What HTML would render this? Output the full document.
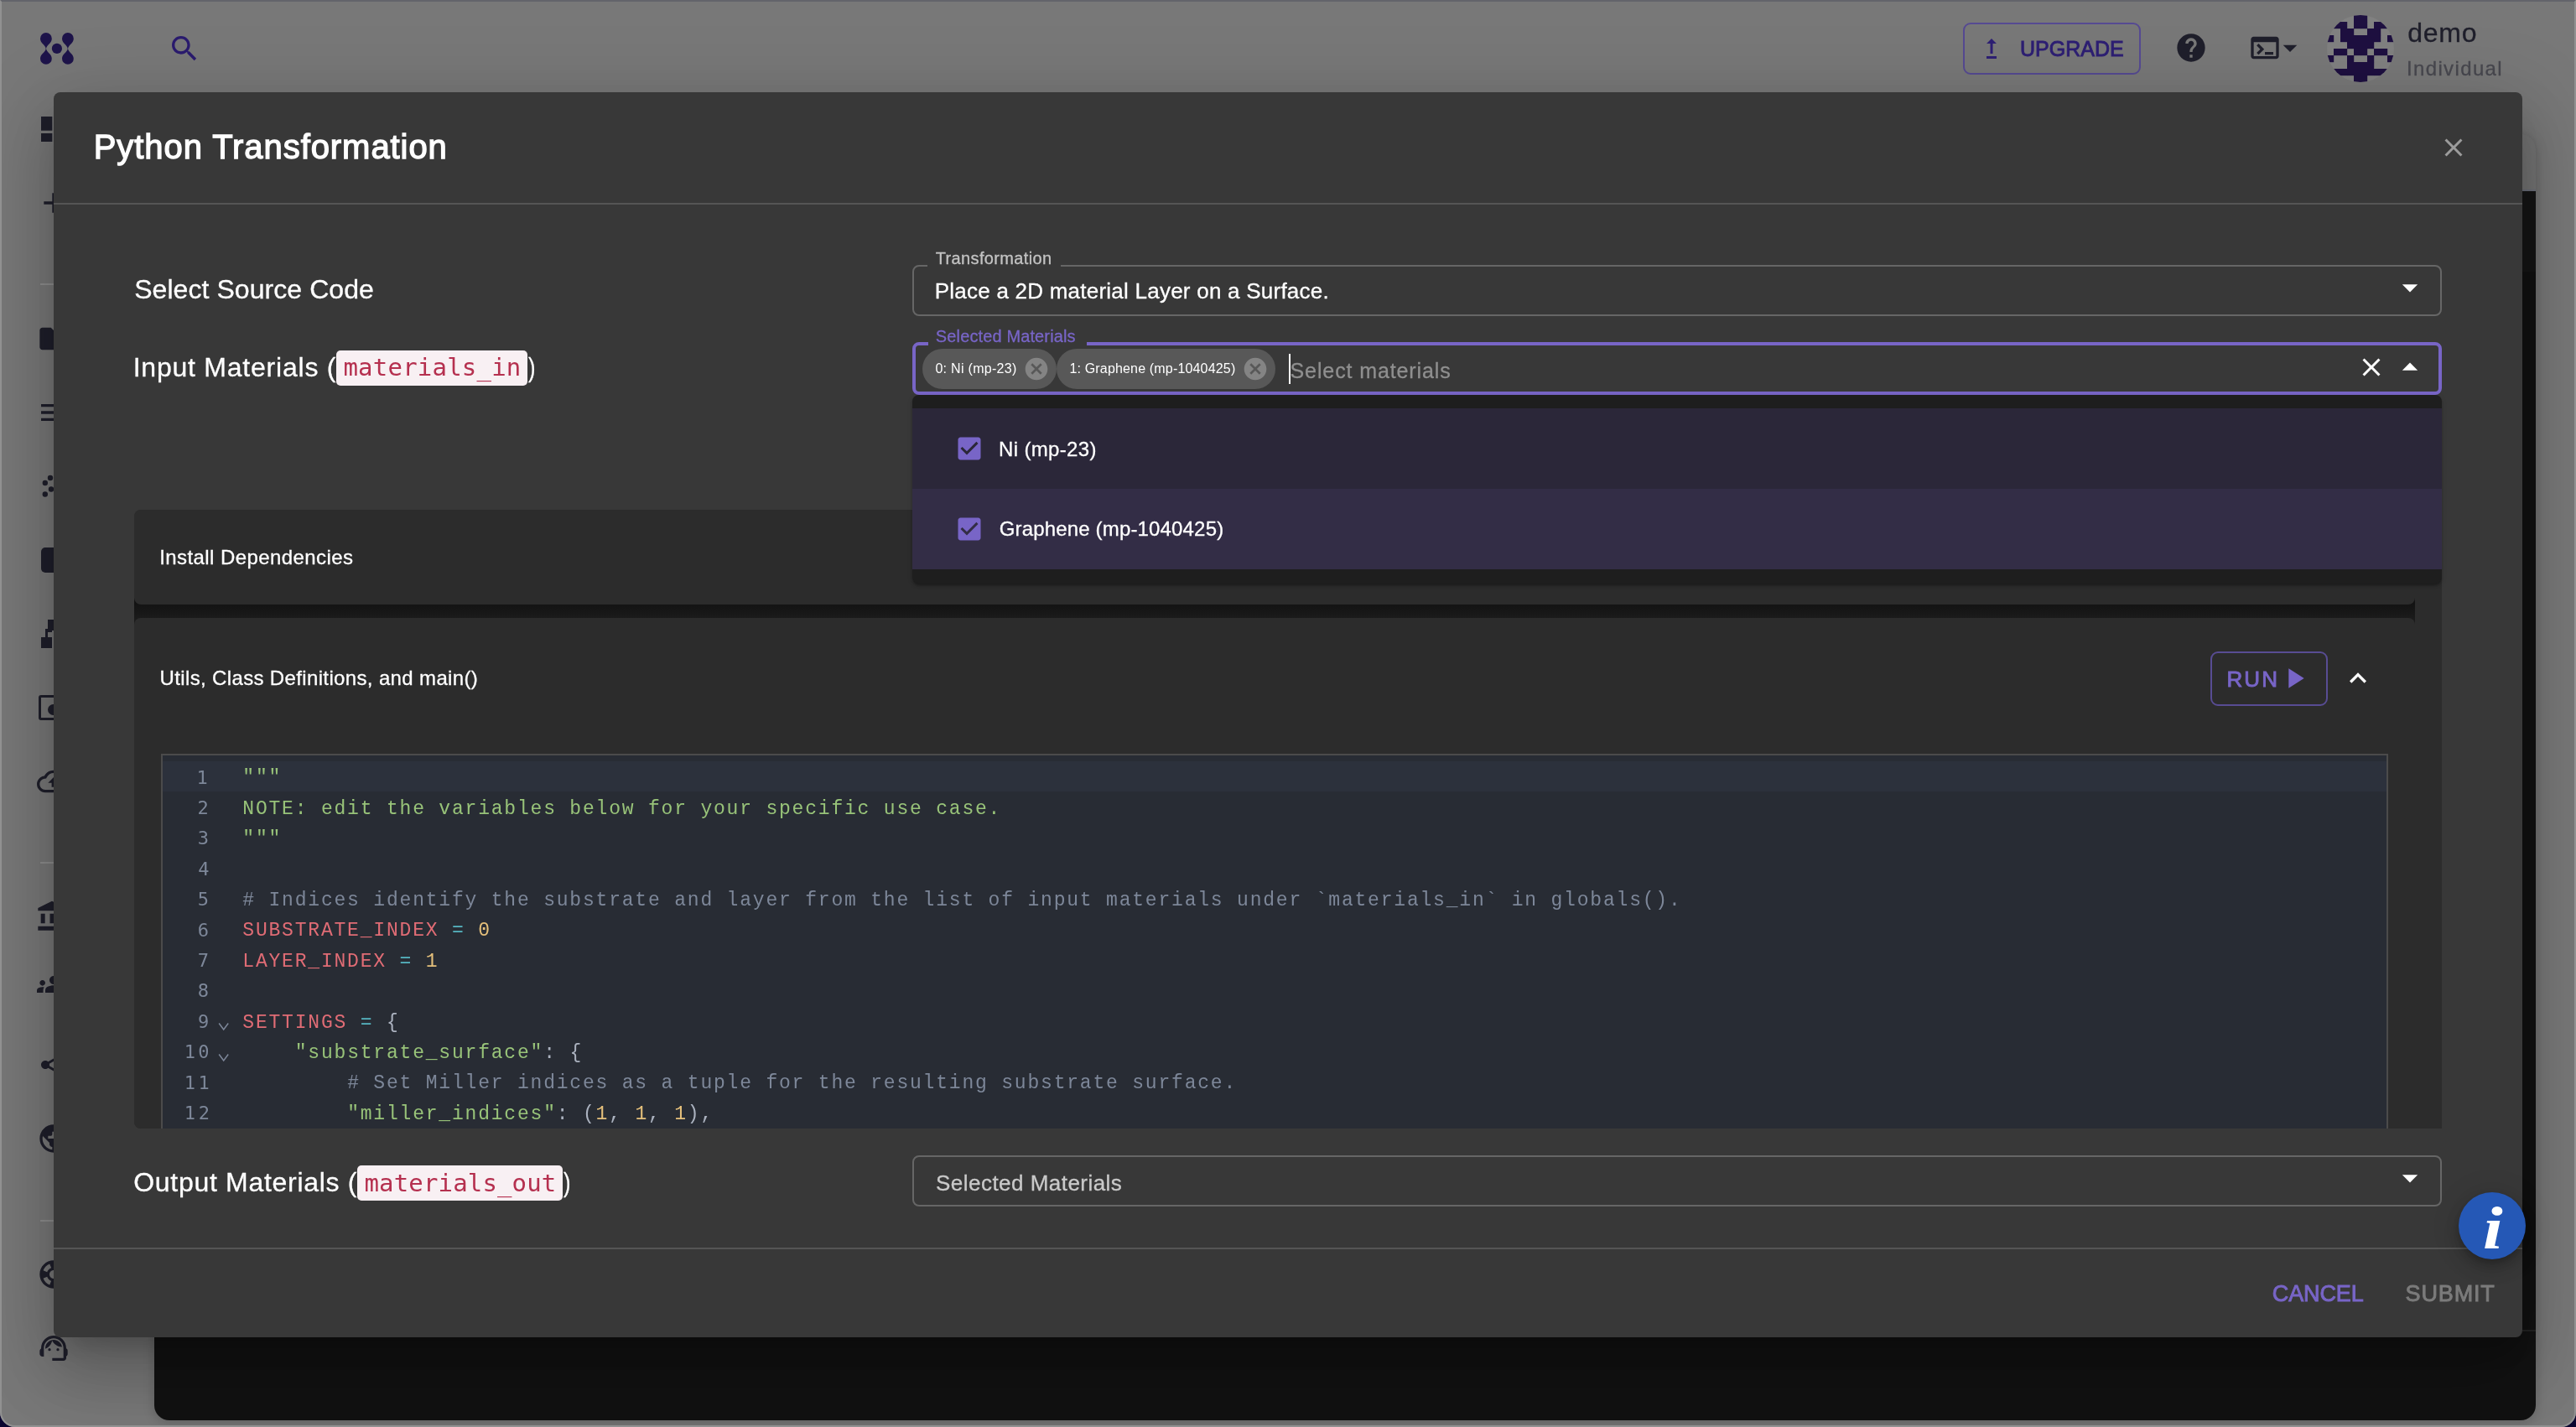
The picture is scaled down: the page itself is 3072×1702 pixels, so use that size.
<!DOCTYPE html>
<html lang="en"><head><meta charset="utf-8"><title>Python Transformation</title>
<style>
*{box-sizing:border-box;margin:0;padding:0}
html{background:#0a0530}
body{width:3072px;height:1702px;overflow:hidden;position:relative;font-family:"Liberation Sans",sans-serif;background:#0a0530}
.a{position:absolute}
.t{position:absolute;line-height:1;white-space:pre}
#page{will-change:transform}
#page{position:absolute;left:0;top:0;width:3072px;height:1702px;background:#787878;border-radius:0 0 18px 18px;overflow:hidden}
#frame{position:absolute;left:0;top:0;width:3072px;height:1702px;border:2px solid #919191;border-top:2px solid #63646b;border-radius:0 0 18px 18px;pointer-events:none}
#dialog{position:absolute;left:64px;top:110px;width:2944px;height:1485px;background:#383838;border-radius:8px;box-shadow:0 22px 30px -14px rgba(0,0,0,.2),0 48px 76px 6px rgba(0,0,0,.14),0 18px 92px 16px rgba(0,0,0,.12)}
.field{position:absolute;border:2px solid #666;border-radius:8px}
.code{position:absolute;background:#f8f0f3;border-radius:5px}
.ln{position:absolute;left:0;width:2650px;height:36.4px}
</style></head><body><div id="page">
<svg class="a" style="left:40px;top:30px" width="60" height="56" viewBox="40 30 60 56"><g fill="#1e144a">
<path d="M54.9 58.4 C54.4 53.5 48 51.5 48 45.9 A6.9 6.9 0 0 1 61.8 45.9 C61.8 51.5 55.4 53.5 54.9 58.4Z"/>
<path d="M54.9 57.4 C54.4 62.3 48 64.3 48 69.9 A6.9 6.9 0 0 0 61.8 69.9 C61.8 64.3 55.4 62.3 54.9 57.4Z"/>
<path d="M80.9 58.4 C80.4 53.5 74 51.5 74 45.9 A6.9 6.9 0 0 1 87.8 45.9 C87.8 51.5 81.4 53.5 80.9 58.4Z"/>
<path d="M80.9 57.4 C80.4 62.3 74 64.3 74 69.9 A6.9 6.9 0 0 0 87.8 69.9 C87.8 64.3 81.4 62.3 80.9 57.4Z"/>
<circle cx="67.9" cy="57.9" r="6.1"/></g></svg><svg class="a" style="left:200px;top:38px" width="40" height="40" viewBox="0 0 24 24"><path fill="#2a1b6e" d="M15.5 14h-.79l-.28-.27C15.41 12.59 16 11.11 16 9.5 16 5.91 13.09 3 9.5 3S3 5.91 3 9.5 5.91 16 9.5 16c1.61 0 3.09-.59 4.23-1.57l.27.28v.79l5 4.99L20.49 19l-4.99-5zm-6 0C7.01 14 5 11.990 5 9.5S7.01 5 9.5 5 14 7.01 14 9.5 11.99 14 9.500 14z"/></svg><div class="a" style="left:2341px;top:27px;width:212px;height:62px;border:2px solid #564a92;border-radius:9px"></div><svg class="a" style="left:2357px;top:40px" width="36" height="36" viewBox="0 0 24 24"><path fill="#2d1f73" d="M16 18v2H8v-2h8zM11 7.99V16h2V7.990h3L12 4 8 7.990h3z"/></svg><span class="t" style="left:2409.05px;top:45.64px;font-size:25px;color:#2d1f73;letter-spacing:-0.010px;-webkit-text-stroke:0.9px #2d1f73;">UPGRADE</span><svg class="a" style="left:2593px;top:37px" width="40" height="40" viewBox="0 0 24 24"><path fill="#1f1f2b" d="M12 2C6.48 2 2 6.48 2 12s4.48 10 10 10 10-4.48 10-10S17.52 2 12 2zm1 17h-2v-2h2v2zm2.070-7.750-.9.920C13.450 12.9 13 13.5 13 15h-2v-.5c0-1.1.450-2.100 1.170-2.830l1.240-1.260c.370-.36.590-.86.590-1.410 0-1.100-.9-2-2-2s-2 .9-2 2H8c0-2.210 1.790-4 4-4s4 1.790 4 4c0 .880-.360 1.680-.930 2.250z"/></svg><svg class="a" style="left:2681px;top:37px" width="40" height="40" viewBox="0 0 24 24"><path fill="#1f1f2b" d="M20 4H4c-1.110 0-2 .9-2 2v12c0 1.100.890 2 2 2h16c1.100 0 2-.9 2-2V6c0-1.100-.9-2-2-2zm0 14H4V8h16v10zm-2-1h-6v-2h6v2zM7.500 17l-1.410-1.410L8.670 13l-2.590-2.590L7.500 9l4 4-4 4z"/></svg><svg class="a" style="left:2711px;top:37px" width="40" height="40" viewBox="0 0 24 24"><path fill="#1f1f2b" d="M7 10l5 5 5-5z"/></svg><svg class="a" style="left:2775px;top:18px;border-radius:50%;background:#818181" width="80" height="80" viewBox="0 0 80 80"><g fill="#1e1040"><rect x="32" y="0" width="8.2" height="8.2"/><rect x="40" y="0" width="8.2" height="8.2"/><rect x="8" y="8" width="8.2" height="8.2"/><rect x="16" y="8" width="8.2" height="8.2"/><rect x="32" y="8" width="8.2" height="8.2"/><rect x="40" y="8" width="8.2" height="8.2"/><rect x="56" y="8" width="8.2" height="8.2"/><rect x="64" y="8" width="8.2" height="8.2"/><rect x="16" y="16" width="8.2" height="8.2"/><rect x="24" y="16" width="8.2" height="8.2"/><rect x="48" y="16" width="8.2" height="8.2"/><rect x="56" y="16" width="8.2" height="8.2"/><rect x="0" y="24" width="8.2" height="8.2"/><rect x="16" y="24" width="8.2" height="8.2"/><rect x="24" y="24" width="8.2" height="8.2"/><rect x="32" y="24" width="8.2" height="8.2"/><rect x="40" y="24" width="8.2" height="8.2"/><rect x="48" y="24" width="8.2" height="8.2"/><rect x="56" y="24" width="8.2" height="8.2"/><rect x="72" y="24" width="8.2" height="8.2"/><rect x="24" y="32" width="8.2" height="8.2"/><rect x="32" y="32" width="8.2" height="8.2"/><rect x="40" y="32" width="8.2" height="8.2"/><rect x="48" y="32" width="8.2" height="8.2"/><rect x="8" y="40" width="8.2" height="8.2"/><rect x="16" y="40" width="8.2" height="8.2"/><rect x="32" y="40" width="8.2" height="8.2"/><rect x="40" y="40" width="8.2" height="8.2"/><rect x="56" y="40" width="8.2" height="8.2"/><rect x="64" y="40" width="8.2" height="8.2"/><rect x="0" y="48" width="8.2" height="8.2"/><rect x="24" y="48" width="8.2" height="8.2"/><rect x="48" y="48" width="8.2" height="8.2"/><rect x="72" y="48" width="8.2" height="8.2"/><rect x="24" y="56" width="8.2" height="8.2"/><rect x="32" y="56" width="8.2" height="8.2"/><rect x="40" y="56" width="8.2" height="8.2"/><rect x="48" y="56" width="8.2" height="8.2"/><rect x="8" y="64" width="8.2" height="8.2"/><rect x="16" y="64" width="8.2" height="8.2"/><rect x="24" y="64" width="8.2" height="8.2"/><rect x="32" y="64" width="8.2" height="8.2"/><rect x="40" y="64" width="8.2" height="8.2"/><rect x="48" y="64" width="8.2" height="8.2"/><rect x="56" y="64" width="8.2" height="8.2"/><rect x="64" y="64" width="8.2" height="8.2"/><rect x="32" y="72" width="8.2" height="8.2"/><rect x="40" y="72" width="8.2" height="8.2"/></g></svg><span class="t" style="left:2871.15px;top:22.71px;font-size:32px;color:#1f1f2b;letter-spacing:0.783px;-webkit-text-stroke:0.3px #1f1f2b;">demo</span><span class="t" style="left:2869.95px;top:69.98px;font-size:24px;color:#48484f;letter-spacing:1.370px;-webkit-text-stroke:0.3px #48484f;">Individual</span><svg class="a" style="left:44px;top:134px" width="40" height="40" viewBox="0 0 24 24"><path fill="#1f1f2b" d="M3 13h8V3H3v10zm0 8h8v-6H3v6zm10 0h8V11h-8v10zm0-18v6h8V3h-8z"/></svg><svg class="a" style="left:44px;top:221.5px" width="40" height="40" viewBox="0 0 24 24"><path fill="#1f1f2b" d="M19 13h-6v6h-2v-6H5v-2h6V5h2v6h6v2z"/></svg><div class="a" style="left:48px;top:338px;width:40px;height:2px;background:#8e8e8e"></div><svg class="a" style="left:44px;top:384px" width="40" height="40" viewBox="0 0 24 24"><path fill="#1f1f2b" d="M10 4H4c-1.100 0-1.990.9-1.990 2L2 18c0 1.100.9 2 2 2h16c1.100 0 2-.9 2-2V8c0-1.100-.9-2-2-2h-8l-2-2z"/></svg><svg class="a" style="left:44px;top:471.5px" width="40" height="40" viewBox="0 0 24 24"><path fill="#1f1f2b" d="M21 11.010 3 11v2h18zM3 16h12v2H3zM21 6H3v2.010L21 8z"/></svg><svg class="a" style="left:44px;top:560px" width="40" height="40" viewBox="44 560 40 40"><g fill="#1f1f2b"><circle cx="53.800" cy="576" r="3.200"/><circle cx="60" cy="570" r="3.200"/><circle cx="61" cy="583.500" r="3.200"/><circle cx="53.800" cy="589.500" r="3.200"/><circle cx="68" cy="578" r="3.200"/></g></svg><div class="a" style="left:49px;top:653px;width:32px;height:30px;border-radius:5px;background:#1f1f2b"></div><div class="a" style="left:49px;top:760px;width:13px;height:13px;background:#1f1f2b"></div><div class="a" style="left:57px;top:739px;width:14px;height:13px;background:#1f1f2b"></div><div class="a" style="left:54px;top:750px;width:8px;height:4px;background:#1f1f2b"></div><div class="a" style="left:54px;top:750px;width:3px;height:12px;background:#1f1f2b"></div><div class="a" style="left:45.500px;top:828.500px;width:38px;height:30px;border:3px solid #1f1f2b;border-radius:3px"></div><div class="a" style="left:57px;top:840px;width:16px;height:13px;border-radius:7px;background:#1f1f2b"></div><svg class="a" style="left:44px;top:912px" width="40" height="40" viewBox="0 0 24 24"><path fill="#1f1f2b" d="M19.350 10.040C18.670 6.590 15.640 4 12 4 9.110 4 6.600 5.640 5.350 8.040 2.340 8.360 0 10.910 0 14c0 3.310 2.690 6 6 6h13c2.760 0 5-2.240 5-5 0-2.640-2.050-4.780-4.650-4.960zM19 18H6c-2.210 0-4-1.790-4-4 0-2.050 1.530-3.760 3.560-3.970l1.070-.11.5-.95C8.080 7.140 9.940 6 12 6c2.620 0 4.880 1.860 5.390 4.430l.3 1.500 1.530.11c1.560.1 2.780 1.410 2.780 2.960 0 1.650-1.350 3-3 3zM8 13h2.550v3h2.900v-3H16l-4-4z"/></svg><div class="a" style="left:48px;top:1028px;width:40px;height:2px;background:#8e8e8e"></div><svg class="a" style="left:42px;top:1073px" width="40" height="40" viewBox="0 0 24 24"><path fill="#1f1f2b" d="M4 10h3v7H4zm6.500 0h3v7h-3zM2 19h20v3H2zm15-9h3v7h-3zm-5-9L2 6v2h20V6z"/></svg><svg class="a" style="left:44px;top:1154px" width="40" height="40" viewBox="0 0 24 24"><path fill="#1f1f2b" d="M12 12.750c1.630 0 3.070.390 4.240.9 1.080.480 1.760 1.560 1.760 2.730V18H6v-1.610c0-1.180.680-2.260 1.760-2.730 1.170-.520 2.610-.910 4.240-.910zM4 13c1.100 0 2-.9 2-2s-.9-2-2-2-2 .9-2 2 .9 2 2 2zm1.130 1.100c-.370-.060-.740-.100-1.130-.100-.990 0-1.930.210-2.780.580C.480 14.900 0 15.620 0 16.430V18h4.500v-1.610c0-.830.230-1.610.630-2.290zM20 13c1.100 0 2-.9 2-2s-.9-2-2-2-2 .9-2 2 .9 2 2 2zm4 3.430c0-.810-.480-1.530-1.220-1.850-.850-.370-1.790-.580-2.780-.580-.390 0-.760.040-1.130.100.4.680.630 1.460.630 2.290V18H24v-1.570zM12 6c1.660 0 3 1.340 3 3s-1.340 3-3 3-3-1.340-3-3 1.340-3 3-3z"/></svg><svg class="a" style="left:44px;top:1250px" width="40" height="40" viewBox="0 0 24 24"><path fill="#1f1f2b" d="M18 16.080c-.760 0-1.440.3-1.960.770L8.910 12.700c.050-.230.090-.460.090-.7s-.040-.470-.090-.7l7.050-4.110c.540.5 1.250.810 2.040.810 1.660 0 3-1.340 3-3s-1.340-3-3-3-3 1.340-3 3c0 .240.040.470.090.7L8.040 9.810C7.500 9.310 6.790 9 6 9c-1.660 0-3 1.340-3 3s1.340 3 3 3c.790 0 1.500-.310 2.040-.810l7.120 4.160c-.050.210-.080.430-.080.650 0 1.610 1.310 2.920 2.920 2.920 1.610 0 2.920-1.310 2.920-2.920s-1.310-2.920-2.920-2.920z"/></svg><svg class="a" style="left:44px;top:1337.5px" width="40" height="40" viewBox="0 0 24 24"><path fill="#1f1f2b" d="M12 2C6.480 2 2 6.480 2 12s4.480 10 10 10 10-4.480 10-10S17.520 2 12 2zm-1 17.930c-3.950-.490-7-3.850-7-7.930 0-.620.080-1.210.210-1.790L9 15v1c0 1.100.9 2 2 2v1.930zm6.900-2.540c-.260-.810-1-1.390-1.900-1.390h-1v-3c0-.550-.450-1-1-1H8v-2h2c.550 0 1-.450 1-1V7h2c1.100 0 2-.9 2-2v-.410c2.930 1.190 5 4.060 5 7.410 0 2.080-.8 3.970-2.100 5.390z"/></svg><div class="a" style="left:48px;top:1455px;width:40px;height:2px;background:#8e8e8e"></div><svg class="a" style="left:44px;top:1499.5px" width="40" height="40" viewBox="0 0 24 24"><path fill="#1f1f2b" d="M12 2C6.480 2 2 6.480 2 12s4.480 10 10 10 10-4.480 10-10S17.520 2 12 2zm7.460 7.120-2.780 1.150c-.510-1.360-1.580-2.440-2.950-2.940l1.150-2.780c2.100.8 3.770 2.470 4.580 4.570zM12 15c-1.660 0-3-1.340-3-3s1.340-3 3-3 3 1.340 3 3-1.340 3-3 3zM9.130 4.540l1.170 2.780c-1.380.5-2.470 1.590-2.980 2.970L4.540 9.130c.810-2.110 2.480-3.780 4.590-4.590zM4.540 14.870l2.780-1.150c.510 1.380 1.590 2.460 2.970 2.960l-1.170 2.780c-2.100-.810-3.770-2.480-4.580-4.590zm10.340 4.590-1.150-2.780c1.370-.510 2.450-1.590 2.950-2.970l2.780 1.170c-.810 2.100-2.480 3.770-4.580 4.580z"/></svg><svg class="a" style="left:44px;top:1588px" width="40" height="40" viewBox="0 0 24 24"><path fill="#1f1f2b" d="M21 12.220C21 6.730 16.740 3 12 3c-4.690 0-9 3.650-9 9.280-.6.340-1 .980-1 1.720v2c0 1.100.9 2 2 2h1v-6.100c0-3.870 3.130-7 7-7s7 3.130 7 7V19h-8v2h8c1.100 0 2-.9 2-2v-1.220c.590-.310 1-.920 1-1.640v-2.300c0-.700-.410-1.310-1-1.620z M9 14a1 1 0 1 0 0-2 1 1 0 0 0 0 2z M15 14a1 1 0 1 0 0-2 1 1 0 0 0 0 2z M18 11.030C17.520 8.180 15.040 6 12.050 6c-3.030 0-6.290 2.510-6.030 6.450 2.470-1.010 4.330-3.210 4.860-5.890 1.310 2.630 4 4.440 7.120 4.470z"/></svg><div class="a" style="left:184px;top:160px;width:2840px;height:1534px;border-radius:18px;background:#747474;overflow:hidden;box-shadow:0 2px 14px rgba(0,0,0,.18)"><div class="a" style="left:0;top:66px;width:2840px;height:2px;background:#6c6f7a"></div><div class="a" style="left:0;top:68px;width:2840px;height:96px;background:#161616"></div><div class="a" style="left:0;top:164px;width:2840px;height:1380px;background:#121212"></div><div class="a" style="left:2824px;top:1426px;width:16px;height:2px;background:#222"></div></div><div id="dialog"></div><span class="t" style="left:111.73px;top:155.14px;font-size:40px;color:#fff;letter-spacing:0.936px;-webkit-text-stroke:1.3px #fff;">Python Transformation</span><svg class="a" style="left:2908px;top:158px" width="36" height="36" viewBox="0 0 24 24"><path fill="#9c9c9c" d="M19 6.410 17.590 5 12 10.590 6.410 5 5 6.410 10.590 12 5 17.590 6.410 19 12 13.410 17.590 19 19 17.590 13.410 12z"/></svg><div class="a" style="left:64px;top:242px;width:2944px;height:2px;background:#555"></div><div class="a" style="left:64px;top:1488px;width:2944px;height:2px;background:#555"></div><span class="t" style="left:160.15px;top:328.91px;font-size:32px;color:#fff;letter-spacing:0.064px;-webkit-text-stroke:0.3px #fff;">Select Source Code</span><span class="t" style="left:158.65px;top:421.61px;font-size:32px;color:#fff;letter-spacing:0.777px;-webkit-text-stroke:0.3px #fff;">Input Materials (</span><span class="t" style="left:630.45px;top:421.61px;font-size:32px;color:#fff;-webkit-text-stroke:0.3px #fff;transform:scaleX(.8);transform-origin:left;">)</span><div class="code" style="left:401px;top:418px;width:228px;height:42px"></div><span class="t" style="left:409.44px;top:424.37px;font-size:29px;color:#b5304f;font-family:'DejaVu Sans Mono', 'Liberation Mono', monospace;letter-spacing:0.214px;">materials_in</span><span class="t" style="left:159.25px;top:1394.41px;font-size:32px;color:#fff;letter-spacing:0.703px;-webkit-text-stroke:0.3px #fff;">Output Materials (</span><span class="t" style="left:672.45px;top:1394.41px;font-size:32px;color:#fff;-webkit-text-stroke:0.3px #fff;transform:scaleX(.8);transform-origin:left;">)</span><div class="code" style="left:426px;top:1390px;width:245px;height:42px"></div><span class="t" style="left:434.44px;top:1397.27px;font-size:29px;color:#b5304f;font-family:'DejaVu Sans Mono', 'Liberation Mono', monospace;letter-spacing:0.158px;">materials_out</span><div class="field" style="left:1088px;top:316px;width:1824px;height:61px"></div><div class="a" style="left:1106px;top:314px;width:159px;height:6px;background:#383838"></div><span class="t" style="left:1115.75px;top:298.37px;font-size:20px;color:#c3c3c3;letter-spacing:0.352px;-webkit-text-stroke:0.3px #c3c3c3;">Transformation</span><span class="t" style="left:1114.72px;top:333.69px;font-size:26px;color:#fff;letter-spacing:0.236px;-webkit-text-stroke:0.3px #fff;">Place a 2D material Layer on a Surface.</span><svg class="a" style="left:2851.700px;top:321.400px" width="44" height="44" viewBox="0 0 24 24"><path fill="#fff" d="M7 10l5 5 5-5z"/></svg><div class="field" style="left:1088px;top:1378px;width:1824px;height:61px"></div><span class="t" style="left:1116.04px;top:1397.59px;font-size:26px;color:#c9c9c9;letter-spacing:0.467px;-webkit-text-stroke:0.3px #c9c9c9;">Selected Materials</span><svg class="a" style="left:2851.700px;top:1383.400px" width="44" height="44" viewBox="0 0 24 24"><path fill="#fff" d="M7 10l5 5 5-5z"/></svg><span class="t" style="left:2709.78px;top:1530.14px;font-size:27px;color:#7865c7;letter-spacing:-0.118px;-webkit-text-stroke:0.9px #7865c7;">CANCEL</span><span class="t" style="left:2868.61px;top:1530.14px;font-size:27px;color:#7b7b7b;letter-spacing:0.841px;-webkit-text-stroke:0.9px #7b7b7b;">SUBMIT</span><div class="a" style="left:160px;top:608px;width:2752px;height:738px;border-radius:8px 0 0 8px;background:#2c2c2c;overflow:hidden"><div class="a" style="left:0;top:103px;width:2720px;height:36px;background:linear-gradient(#131313 25%,#1b1b1b 75%)"></div><div class="a" style="left:0;top:0;width:2720px;height:113px;border-radius:8px;background:#2c2c2c"></div><div class="a" style="left:0;top:129px;width:2720px;height:700px;border-radius:8px;background:#2c2c2c"></div><div class="a" style="left:32px;top:290.500px;width:2656px;height:500px;border:2px solid #4b4b4b;background:#282c34;overflow:hidden"><div class="a" style="left:0;top:7.400px;width:2652px;height:36.400px;background:#2c313c"></div></div></div><span class="t" style="left:190.15px;top:652.68px;font-size:24px;color:#fff;letter-spacing:0.426px;-webkit-text-stroke:0.3px #fff;">Install Dependencies</span><span class="t" style="left:190.55px;top:797.08px;font-size:24px;color:#fff;letter-spacing:0.357px;-webkit-text-stroke:0.3px #fff;">Utils, Class Definitions, and main()</span><div class="a" style="left:2636px;top:777px;width:140px;height:65px;border:2px solid #584c93;border-radius:9px"></div><span class="t" style="left:2655.42px;top:797.39px;font-size:26px;color:#7865c7;letter-spacing:2.111px;-webkit-text-stroke:0.9px #7865c7;">RUN</span><svg class="a" style="left:2715.700px;top:788.700px" width="40" height="40" viewBox="0 0 24 24"><path fill="#7865c7" d="M8 5v14l11-7z"/></svg><svg class="a" style="left:2792px;top:789.200px" width="40" height="40" viewBox="0 0 24 24"><path fill="#fff" d="M7.410 15.410 12 10.830l4.590 4.580L18 14l-6-6-6 6z"/></svg><div class="a" style="left:160px;top:900px;width:2686px;height:445.600px;overflow:hidden;font-family:'Liberation Mono', monospace;font-size:23px;letter-spacing:1.800px;line-height:36.400px;white-space:pre"><div class="a" style="left:129.30px;top:10.37px;height:36.400px"><span style="color:#98c379">&quot;&quot;&quot;</span></div><div class="a" style="left:129.30px;top:46.77px;height:36.400px"><span style="color:#98c379">NOTE: edit the variables below for your specific use case.</span></div><div class="a" style="left:129.30px;top:83.17px;height:36.400px"><span style="color:#98c379">&quot;&quot;&quot;</span></div><div class="a" style="left:129.30px;top:119.57px;height:36.400px"></div><div class="a" style="left:129.30px;top:155.97px;height:36.400px"><span style="color:#7d8799"># Indices identify the substrate and layer from the list of input materials under `materials_in` in globals().</span></div><div class="a" style="left:129.30px;top:192.37px;height:36.400px"><span style="color:#e06c75">SUBSTRATE_INDEX</span><span style="color:#abb2bf"> </span><span style="color:#56b6c2">=</span><span style="color:#abb2bf"> </span><span style="color:#e5c07b">0</span></div><div class="a" style="left:129.30px;top:228.77px;height:36.400px"><span style="color:#e06c75">LAYER_INDEX</span><span style="color:#abb2bf"> </span><span style="color:#56b6c2">=</span><span style="color:#abb2bf"> </span><span style="color:#e5c07b">1</span></div><div class="a" style="left:129.30px;top:265.17px;height:36.400px"></div><div class="a" style="left:129.30px;top:301.57px;height:36.400px"><span style="color:#e06c75">SETTINGS</span><span style="color:#abb2bf"> </span><span style="color:#56b6c2">=</span><span style="color:#abb2bf"> {</span></div><div class="a" style="left:129.30px;top:337.97px;height:36.400px"><span style="color:#abb2bf">    </span><span style="color:#98c379">&quot;substrate_surface&quot;</span><span style="color:#abb2bf">: {</span></div><div class="a" style="left:129.30px;top:374.37px;height:36.400px"><span style="color:#abb2bf">        </span><span style="color:#7d8799"># Set Miller indices as a tuple for the resulting substrate surface.</span></div><div class="a" style="left:129.30px;top:410.77px;height:36.400px"><span style="color:#abb2bf">        </span><span style="color:#98c379">&quot;miller_indices&quot;</span><span style="color:#abb2bf">: (</span><span style="color:#e5c07b">1</span><span style="color:#abb2bf">, </span><span style="color:#e5c07b">1</span><span style="color:#abb2bf">, </span><span style="color:#e5c07b">1</span><span style="color:#abb2bf">),</span></div></div><span class="t" style="left:234.60px;top:916.69px;font-size:22px;color:#7d8799;font-family:'DejaVu Sans Mono', 'Liberation Mono', monospace;clip-path:inset(0 0 0.0px 0);">1</span><span class="t" style="left:235.60px;top:953.09px;font-size:22px;color:#7d8799;font-family:'DejaVu Sans Mono', 'Liberation Mono', monospace;clip-path:inset(0 0 0.0px 0);">2</span><span class="t" style="left:235.80px;top:989.49px;font-size:22px;color:#7d8799;font-family:'DejaVu Sans Mono', 'Liberation Mono', monospace;clip-path:inset(0 0 0.0px 0);">3</span><span class="t" style="left:236.20px;top:1025.89px;font-size:22px;color:#7d8799;font-family:'DejaVu Sans Mono', 'Liberation Mono', monospace;clip-path:inset(0 0 0.0px 0);">4</span><span class="t" style="left:235.70px;top:1062.29px;font-size:22px;color:#7d8799;font-family:'DejaVu Sans Mono', 'Liberation Mono', monospace;clip-path:inset(0 0 0.0px 0);">5</span><span class="t" style="left:235.80px;top:1098.69px;font-size:22px;color:#7d8799;font-family:'DejaVu Sans Mono', 'Liberation Mono', monospace;clip-path:inset(0 0 0.0px 0);">6</span><span class="t" style="left:235.80px;top:1135.09px;font-size:22px;color:#7d8799;font-family:'DejaVu Sans Mono', 'Liberation Mono', monospace;clip-path:inset(0 0 0.0px 0);">7</span><span class="t" style="left:235.80px;top:1171.49px;font-size:22px;color:#7d8799;font-family:'DejaVu Sans Mono', 'Liberation Mono', monospace;clip-path:inset(0 0 0.0px 0);">8</span><span class="t" style="left:235.90px;top:1207.89px;font-size:22px;color:#7d8799;font-family:'DejaVu Sans Mono', 'Liberation Mono', monospace;clip-path:inset(0 0 0.0px 0);">9</span><span class="t" style="left:219.80px;top:1244.29px;font-size:22px;color:#7d8799;font-family:'DejaVu Sans Mono', 'Liberation Mono', monospace;letter-spacing:3.255px;">10</span><span class="t" style="left:219.80px;top:1280.69px;font-size:22px;color:#7d8799;font-family:'DejaVu Sans Mono', 'Liberation Mono', monospace;letter-spacing:3.355px;">11</span><span class="t" style="left:219.80px;top:1317.09px;font-size:22px;color:#7d8799;font-family:'DejaVu Sans Mono', 'Liberation Mono', monospace;letter-spacing:3.755px;">12</span><svg class="a" style="left:258px;top:1218.4px" width="18" height="14" viewBox="0 0 18 14"><path d="M3.200 2.500 L8.700 10 L14.200 2.500" fill="none" stroke="#7d8799" stroke-width="1.500"/></svg><svg class="a" style="left:258px;top:1254.8px" width="18" height="14" viewBox="0 0 18 14"><path d="M3.200 2.500 L8.700 10 L14.200 2.500" fill="none" stroke="#7d8799" stroke-width="1.500"/></svg><div class="field" style="left:1088px;top:408px;width:1824px;height:63px;border:4px solid #7865c7"></div><div class="a" style="left:1107px;top:404px;width:189px;height:10px;background:#383838"></div><span class="t" style="left:1115.85px;top:390.67px;font-size:20px;color:#7865c7;letter-spacing:0.128px;-webkit-text-stroke:0.3px #7865c7;">Selected Materials</span><div class="a" style="left:1100px;top:416px;width:159.5px;height:48px;border-radius:24px;background:#585858"></div><span class="t" style="left:1115.40px;top:432.26px;font-size:16px;color:#fff;letter-spacing:0.298px;">0: Ni (mp-23)</span><svg class="a" style="left:1220px;top:424.300px" width="32" height="32" viewBox="0 0 24 24"><path fill="#848484" d="M12 2C6.470 2 2 6.470 2 12s4.470 10 10 10 10-4.470 10-10S17.530 2 12 2zm5 13.590L15.590 17 12 13.410 8.410 17 7 15.590 10.590 12 7 8.410 8.410 7 12 10.590 15.590 7 17 8.410 13.410 12 17 15.590z"/></svg><div class="a" style="left:1260.4px;top:416px;width:260.6px;height:48px;border-radius:24px;background:#585858"></div><span class="t" style="left:1275.40px;top:432.26px;font-size:16px;color:#fff;letter-spacing:0.171px;">1: Graphene (mp-1040425)</span><svg class="a" style="left:1481px;top:424.300px" width="32" height="32" viewBox="0 0 24 24"><path fill="#848484" d="M12 2C6.470 2 2 6.470 2 12s4.470 10 10 10 10-4.470 10-10S17.530 2 12 2zm5 13.590L15.590 17 12 13.410 8.410 17 7 15.590 10.590 12 7 8.410 8.410 7 12 10.590 15.590 7 17 8.410 13.410 12 17 15.590z"/></svg><div class="a" style="left:1537px;top:422px;width:2px;height:36px;background:#fff"></div><span class="t" style="left:1538.55px;top:429.84px;font-size:25px;color:#8f8f8f;letter-spacing:0.890px;-webkit-text-stroke:0.3px #8f8f8f;">Select materials</span><svg class="a" style="left:2810px;top:420.400px" width="36" height="36" viewBox="0 0 24 24"><path fill="#fff" d="M19 6.410 17.590 5 12 10.590 6.410 5 5 6.410 10.590 12 5 17.590 6.410 19 12 13.410 17.590 19 19 17.590 13.410 12z"/></svg><svg class="a" style="left:2851.700px;top:415.700px" width="44" height="44" viewBox="0 0 24 24"><path fill="#fff" d="M7 14l5-5 5 5z"/></svg><div class="a" style="left:1088px;top:471px;width:1824px;height:225px;border-radius:8px;background:#1e1e1e;overflow:hidden;box-shadow:0 4px 4px -2px rgba(0,0,0,.2),0 2px 2px 0 rgba(0,0,0,.14),0 2px 6px 0 rgba(0,0,0,.12)"><div class="a" style="left:0;top:16px;width:1824px;height:96px;background:#2b2739"></div><div class="a" style="left:0;top:112px;width:1824px;height:96px;background:#332d46"></div></div><svg class="a" style="left:1138px;top:517px" width="36" height="36" viewBox="0 0 24 24"><path fill="#7865c7" d="M19 3H5c-1.110 0-2 .9-2 2v14c0 1.100.890 2 2 2h14c1.110 0 2-.9 2-2V5c0-1.100-.890-2-2-2zm-9 14l-5-5 1.410-1.410L10 14.170l7.590-7.590L19 8l-9 9z"/></svg><svg class="a" style="left:1138px;top:613.200px" width="36" height="36" viewBox="0 0 24 24"><path fill="#7865c7" d="M19 3H5c-1.110 0-2 .9-2 2v14c0 1.100.890 2 2 2h14c1.110 0 2-.9 2-2V5c0-1.100-.890-2-2-2zm-9 14l-5-5 1.410-1.410L10 14.170l7.590-7.590L19 8l-9 9z"/></svg><span class="t" style="left:1191.05px;top:523.58px;font-size:24px;color:#fff;letter-spacing:0.339px;-webkit-text-stroke:0.3px #fff;">Ni (mp-23)</span><span class="t" style="left:1191.75px;top:619.48px;font-size:24px;color:#fff;letter-spacing:0.161px;-webkit-text-stroke:0.3px #fff;">Graphene (mp-1040425)</span><div class="a" style="left:2932px;top:1422px;width:80px;height:80px;border-radius:50%;background:#2558b6;box-shadow:0 6px 10px -2px rgba(0,0,0,.2),0 12px 20px 0 rgba(0,0,0,.14),0 2px 36px 0 rgba(0,0,0,.12)"></div><span class="t" style="left:2960.69px;top:1429.50px;font-size:71px;color:#fff;font-family:'Liberation Serif', serif;font-weight:700;font-style:italic;transform:scaleX(1.2);transform-origin:left;">i</span></div><div id="frame"></div></body></html>
